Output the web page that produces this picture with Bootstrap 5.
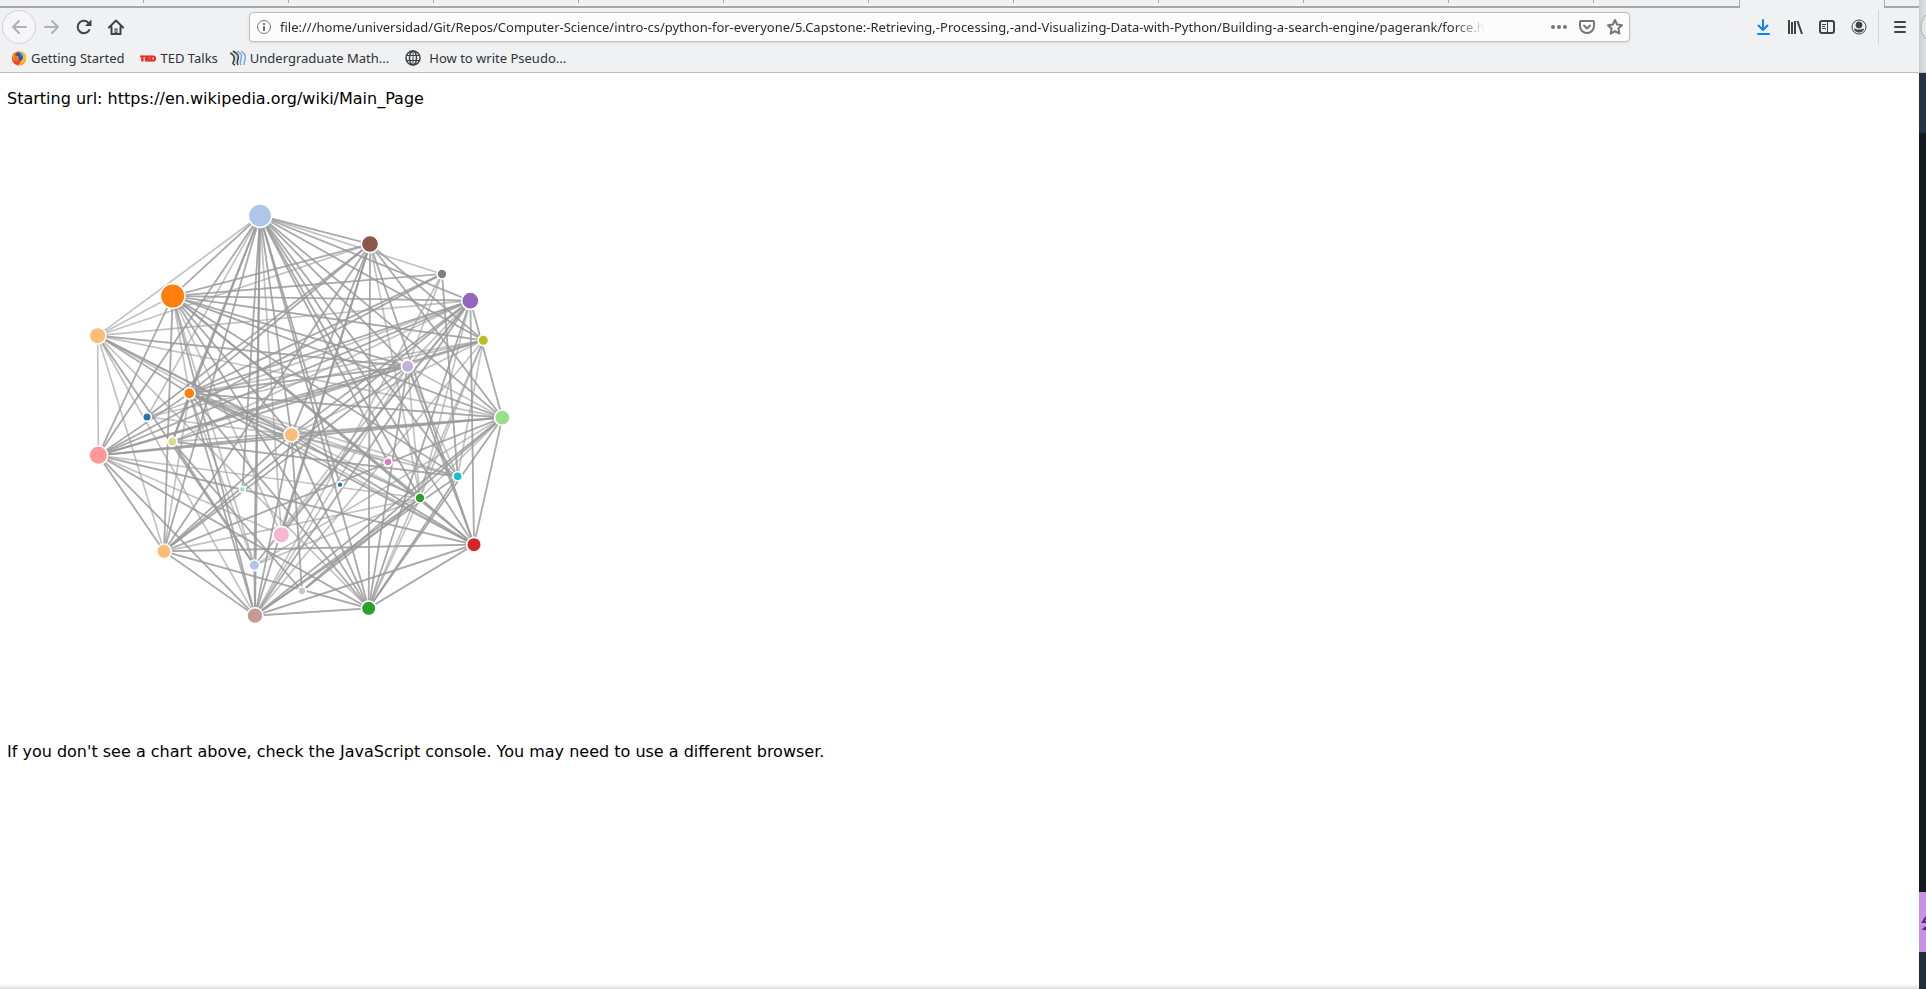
<!DOCTYPE html>
<html lang="en">
<head>
<meta charset="utf-8">
<meta name="viewport" content="width=device-width, initial-scale=1">
<title>Page rank force chart</title>
<link href="https://cdn.jsdelivr.net/npm/bootstrap@5.3.0/dist/css/bootstrap.min.css" rel="stylesheet">
<style>
  body { font-family: "DejaVu Sans", sans-serif; font-size: 16px; line-height: 20px; color: #000; background: #fff; }
  .chrome { background: #f0f1f3; font-family: "Noto Sans", sans-serif; font-size: 13px; color: #2e3436; border-bottom: 1px solid #bcbec0; }
  .tab-strip { height: 8px; }
  .tab-item { flex: 0 1 145px; border-bottom: 2px solid #a6a7a8; position: relative; }
  .tab-item::after { content: ""; position: absolute; right: 1px; top: 0; width: 1px; height: 3px; background: #a6a7a8; }
  .tab-item.before-active::after { right: 0; height: 8px; }
  .tab-item.active-tab { border-color: transparent; }
  .tab-item.active-tab::after { right: 0; height: 8px; }
  .tab-rest { border-bottom: 2px solid #a6a7a8; }
  .nav-row { height: 38px; padding-left: 2px; padding-right: 3px; }
  .tool-btn { width: 32px; height: 32px; padding: 0; border: 0; background: none; color: #414244; display: flex; align-items: center; justify-content: center; flex: none; }
  .tool-btn:disabled { color: #b0b1b3; }
  .back-btn { width: 34px; height: 34px; border: 1px solid #d2d3d5; border-radius: 50%; background: #f6f6f8; }
  .url-box { height: 30px; margin-left: 117px; margin-right: 117px; background: #fcfcfc; border: 1px solid #bfc0c1; border-radius: 4px; box-shadow: 0 1px 3px #0000001a; color: #757677; }
  .url-box .tool-btn { width: 28px; height: 28px; color: #757677; }
  .url-input { border: 0; padding: 0 0 0 2px; background: none; color: #2a2d30; min-width: 0; height: 28px; font-size: 13px; margin-right: 60px;
    -webkit-mask-image: linear-gradient(to left, transparent, #000 32px); mask-image: linear-gradient(to left, transparent, #000 32px); outline: 0; }
  .tool-sep { width: 1px; height: 34px; background: #d3d4d5; margin: 0 5px 0 3px; }
  .mark-row { height: 26px; padding-left: 11px; padding-bottom: 2px; }
  .mark-row a { color: #2e3436; text-decoration: none; line-height: 18px; }
  .ted-text { font: 900 8px "Liberation Sans", sans-serif; fill: #e62b1e; stroke: #e62b1e; stroke-width: 1px; }
  .page-body { padding: 16px 7px 0; }
  .chart { width: 500px; height: 617px; display: block; overflow: visible; }
  .links line { stroke: #999; stroke-opacity: .6; stroke-width: 5; }
  .nodes circle { stroke: #fff; stroke-width: 5; }
  .edge-strip { width: 7px; flex: none; overflow: hidden; }
  .edge-top { height: 73px; background: linear-gradient(to right, #cfcfd0, #dedfe0); border-bottom: 1px solid #bcbec0; }
  .edge-head { height: 60px; background: #263347; }
  .edge-dark { background: #141a22; }
  .edge-purple { height: 60px; background: #c892e4; color: #5b2380; }
  .edge-foot { height: 37px; background: #222d3b; }
  .window-shadow { height: 5px; background: linear-gradient(#fff, #dcdcdc); }
</style>
</head>
<body>
<div class="d-flex min-vh-100">
  <div class="d-flex flex-column flex-grow-1" style="min-width:0">
    <header class="chrome">
      <div class="tab-strip d-flex" id="tabs"></div>
      <div class="nav-row d-flex align-items-center">
        <button class="tool-btn back-btn" disabled aria-label="Back"><svg width="16" height="16" fill="none" stroke="currentColor" stroke-width="2" stroke-linecap="round" stroke-linejoin="round"><path d="M15 8H2M8 2L2 8l6 6"/></svg></button>
        <button class="tool-btn" disabled aria-label="Forward"><svg width="16" height="16" fill="none" stroke="currentColor" stroke-width="2" stroke-linecap="round" stroke-linejoin="round"><path d="M1 8h13M8 2l6 6-6 6"/></svg></button>
        <button class="tool-btn" aria-label="Reload"><svg width="16" height="16" fill="none" stroke="currentColor" stroke-width="2"><path d="M13.300 11A6.200 6.200 0 1 1 13 4.500" stroke-linecap="round"/><path d="M15.500 .5v6.500H9z" fill="currentColor" stroke="none"/></svg></button>
        <button class="tool-btn" aria-label="Home"><svg width="16" height="16" fill="none" stroke="currentColor" stroke-width="2" stroke-linecap="round" stroke-linejoin="round"><path d="M1 8.500L8 1.500l7 7M3.500 8v7h9V8"/><path d="M6.500 15V9.500h3V15z" fill="currentColor" stroke="none"/><path d="M8 11v2" stroke="#f0f1f3" stroke-width="1"/></svg></button>
        <div class="url-box d-flex align-items-center flex-grow-1" style="min-width:0">
          <button class="tool-btn" aria-label="Site information"><svg width="16" height="16"><circle cx="8" cy="8" r="6.500" fill="none" stroke="currentColor"/><path d="M8 7v5M8 4v2" stroke="currentColor" stroke-width="2"/></svg></button>
          <input class="url-input flex-grow-1" type="text" aria-label="Address" value="file:///home/universidad/Git/Repos/Computer-Science/intro-cs/python-for-everyone/5.Capstone:-Retrieving,-Processing,-and-Visualizing-Data-with-Python/Building-a-search-engine/pagerank/force.html">
          <button class="tool-btn" aria-label="Page actions"><svg width="16" height="16" fill="currentColor"><circle cx="2" cy="8" r="2"/><circle cx="8" cy="8" r="2"/><circle cx="14" cy="8" r="2"/></svg></button>
          <button class="tool-btn" aria-label="Save to Pocket"><svg width="16" height="16" fill="none" stroke="currentColor" stroke-width="2" stroke-linecap="round" stroke-linejoin="round"><path d="M2 2h12a1 1 0 0 1 1 1v4a7 7 0 0 1-14 0V3a1 1 0 0 1 1-1z"/><path d="M5 6.500l3 3 3-3"/></svg></button>
          <button class="tool-btn" aria-label="Bookmark this page"><svg width="16" height="16" fill="none" stroke="currentColor" stroke-width="2" stroke-linejoin="round"><path d="M8 1l2.100 4.600 4.900.6-3.600 3.400.9 5L8 12.100l-4.300 2.500.9-5L1 6.200l4.900-.6z"/></svg></button>
        </div>
        <button class="tool-btn" aria-label="Downloads"><svg width="16" height="16" fill="none" stroke="#0a84ff" stroke-width="2" stroke-linecap="round" stroke-linejoin="round"><path d="M8 1v10M3.500 6.500L8 11l4.500-4.500M3 15h11"/></svg></button>
        <button class="tool-btn" aria-label="Library"><svg width="16" height="16" fill="none" stroke="currentColor" stroke-width="2"><path d="M2 1v14M5 3v12M8 2v13M10.500 2l4.500 13"/></svg></button>
        <button class="tool-btn" aria-label="Sidebars"><svg width="16" height="16" fill="none" stroke="currentColor"><rect x="1" y="2" width="14" height="12" rx="2" stroke-width="2"/><path d="M8.500 2v12"/><path d="M3 5.500h4M3 7.500h3M3 9.500h4"/></svg></button>
        <button class="tool-btn" aria-label="Account"><svg width="16" height="16" fill="none" stroke="currentColor"><circle cx="8" cy="8" r="7"/><circle cx="8" cy="6" r="3" fill="currentColor"/><path d="M3.500 10c2 1.500 7 1.500 9 0-.5 4-8.500 4-9 0z" fill="currentColor"/></svg></button>
        <div class="tool-sep"></div>
        <button class="tool-btn" aria-label="Menu"><svg width="16" height="16" fill="none" stroke="currentColor" stroke-width="2" stroke-linecap="round"><path d="M3 3h10M3 8h10M3 13h10"/></svg></button>
      </div>
      <nav class="mark-row d-flex align-items-center" aria-label="Bookmarks">
        <a href="#" class="d-flex align-items-center gap-1 me-3"><svg width="16" height="16"><circle cx="8" cy="8.500" r="7" fill="#ff3b30"/><path d="M8 1c5 0 8 4 7 8.500-1 4-5 6-8 5.500 4-2 4-9 1-14z" fill="#ffbd1f"/><path d="M1 6c1-3 2-3 3-4v2c5-1 7 3 5 6-3 3-7 1-8-4z" fill="#ff8a16"/><circle cx="8" cy="7" r="4" fill="#2556b8"/><path d="M4 6c3-1 5 1 3 3l2 1c-3 2-5-1-5-4z" fill="#ff7a18"/><path d="M8 2c3 0 4 3 3 5z" fill="#27b4f0"/></svg>Getting Started</a>
        <a href="#" class="d-flex align-items-center gap-1 me-2 pe-1"><svg width="16" height="16"><text class="ted-text" x="0" y="11">TED</text></svg>TED Talks</a>
        <a href="#" class="d-flex align-items-center gap-1 me-3"><svg width="16" height="16" fill="none"><path d="M0 3l3-2 5 4v7l-3 3-3-1c3-4 1-8-2-11z" fill="#e5d9a4"/><path d="M0 3c4 2 5 4 4 7s-2 4 1 5M3 1c5 3 6 4 5 8s-1 4 0 6" stroke="#263f66" stroke-width="1.500"/><path d="M7 1c5 3 5 4 4 8s-1 4 0 6M11 1c4 3 5 4 4 8s-1 4-1 6" stroke="#76a9de" stroke-width="1.500"/></svg>Undergraduate Math...</a>
        <a href="#" class="d-flex align-items-center gap-2"><svg width="16" height="16" fill="none" stroke="#414244" stroke-width="1.500"><circle cx="8" cy="8" r="7"/><ellipse cx="8" cy="8" rx="3.500" ry="7"/><path d="M1.500 5.500h13M1.500 10.500h13M8 1v14" stroke-width="1"/></svg>How to write Pseudo...</a>
      </nav>
    </header>
    <main class="page-body flex-grow-1">
      <p class="mb-0">Starting url: https://en.wikipedia.org/wiki/Main_Page</p>
      <svg class="chart my-2" id="chart" viewBox="0 0 1500 1851" role="img" aria-label="Page rank link graph"><g class="links"></g><g class="nodes"></g></svg>
      <p class="mb-0">If you don't see a chart above, check the JavaScript console. You may need to use a different browser.</p>
    </main>
    <div class="window-shadow"></div>
  </div>
  <aside class="edge-strip d-flex flex-column" aria-hidden="true">
    <div class="edge-top"><svg class="d-block" width="7" height="72"><circle cx="19" cy="27" r="17" fill="#e6e7e8" stroke="#aaa"/></svg></div>
    <div class="edge-head"></div>
    <div class="edge-dark flex-grow-1"></div>
    <div class="edge-purple"><svg class="d-block" width="7" height="60"><path d="M7 25L4 30h3M7 35l-2 2h2" stroke="currentColor" stroke-width="2" fill="none"/></svg></div>
    <div class="edge-foot"></div>
  </aside>
</div>
<script src="https://cdn.jsdelivr.net/npm/bootstrap@5.3.0/dist/js/bootstrap.bundle.min.js"></script>
<script>
  const tabs = document.getElementById('tabs');
  for (let i = 0; i < 13; i++) {
    const t = document.createElement('div');
    t.className = 'tab-item' + (i === 11 ? ' before-active' : i === 12 ? ' active-tab' : '');
    tabs.append(t);
  }
  const rest = document.createElement('div');
  rest.className = 'tab-rest flex-grow-1';
  tabs.append(rest);

  // id: [x, y, radius, colour]
  const nodes = {
    A: [540, 77, 35, '#aec7e8'], B: [278, 318, 37, '#ff7f0e'], C: [53, 437, 25, '#ffbb78'], D: [328, 610, 17, '#ff7f0e'],
    E: [201, 681, 13, '#1f77b4'], F: [870, 162, 26, '#8c564b'], G: [1086, 252, 15, '#7f7f7f'], H: [1171, 332, 26, '#9467bd'],
    I: [1210, 451, 16, '#bcbd22'], J: [983, 529, 19, '#c5b0d5'], K: [1267, 683, 23, '#98df8a'], L: [55, 796, 28, '#ff9896'],
    M: [277, 755, 14, '#dbdb8d'], N: [634, 734, 22, '#ffbb78'], O: [487, 898, 9, '#9edae5'], P: [252, 1084, 22, '#ffbb78'],
    Q: [604, 1034, 25, '#f7b6d2'], R: [523, 1126, 16, '#aec7e8'], S: [666, 1203, 12, '#c7c7c7'], T: [525, 1277, 24, '#c49c94'],
    U: [924, 816, 12, '#e377c2'], V: [780, 884, 9, '#1f77b4'], W: [1133, 859, 14, '#17becf'], X: [1020, 924, 15, '#2ca02c'],
    Y: [1182, 1064, 22, '#d62728'], Z: [866, 1255, 22, '#2ca02c']
  };
  // for each source, the targets with the number of links between the two
  const links = {
    A: 'C1 B2 L2 P2 T2 E1 D2 M2 R2 Z2 Y2 K2 H2 F2 G1 J2 N2 I2 W2 X2 Q1 O2 U2 V2',
    B: 'C1 F2 G2 H2 I2 K2 J2 Y2 X2 W2 Z2 T2 R1 P2 L2 N2 Q1 D1',
    C: 'L1 P1 T1 Z1 D2 N2 X1 Y1 J2 K1 H1 F1 R2',
    D: 'F2 H2 G2 I1 J2 K2 Y2 X2 N2 W1 L2 P1 T2 Z2 R1 U1 M2',
    E: 'F2 I1 N1 H1',
    L: 'J2 K2 H2 G2 I2 N2 X1 Q1 Z2 T2 P2 Y2',
    P: 'T2 Z2 Y2 K2 J2 H2 N2 F2 X1',
    T: 'Z2 Y2 K2 H2 J1 F2 I1 N2 R2 W2 X2 G1',
    Z: 'Y2 K2 H2 F2 J2 N2 X1 W2 I1',
    Y: 'K2 H2 F2 N2 J2 X2',
    K: 'H2 F2 J1 N2 X1 S2 M1 R1',
    H: 'M1 N2 X1 Q2 J1 R1',
    F: 'X1 Q2 N2 I2',
    G: 'J1 W2',
    I: 'M1 N1 X1 W1',
    J: 'M1 W1 R1 X1',
    M: 'W2 S2 R2',
    N: 'W1 U1 S2',
    X: 'S2 R1'
  };
  const ns = 'http://www.w3.org/2000/svg';
  const chart = document.getElementById('chart');
  const dx = 219, dy = 219;
  function add(parent, name, attrs) {
    const el = document.createElementNS(ns, name);
    for (const k in attrs) el.setAttribute(k, attrs[k]);
    parent.append(el);
  }
  const linkGroup = chart.querySelector('.links'), nodeGroup = chart.querySelector('.nodes');
  for (const s in links) for (const t of links[s].split(' ')) {
    const a = nodes[s], b = nodes[t[0]];
    for (let i = 0; i < +t[1]; i++) add(linkGroup, 'line', { x1: a[0] + dx, y1: a[1] + dy, x2: b[0] + dx, y2: b[1] + dy });
  }
  for (const id in nodes) {
    const [x, y, r, fill] = nodes[id];
    add(nodeGroup, 'circle', { cx: x + dx, cy: y + dy, r, fill });
  }
</script>
</body>
</html>
